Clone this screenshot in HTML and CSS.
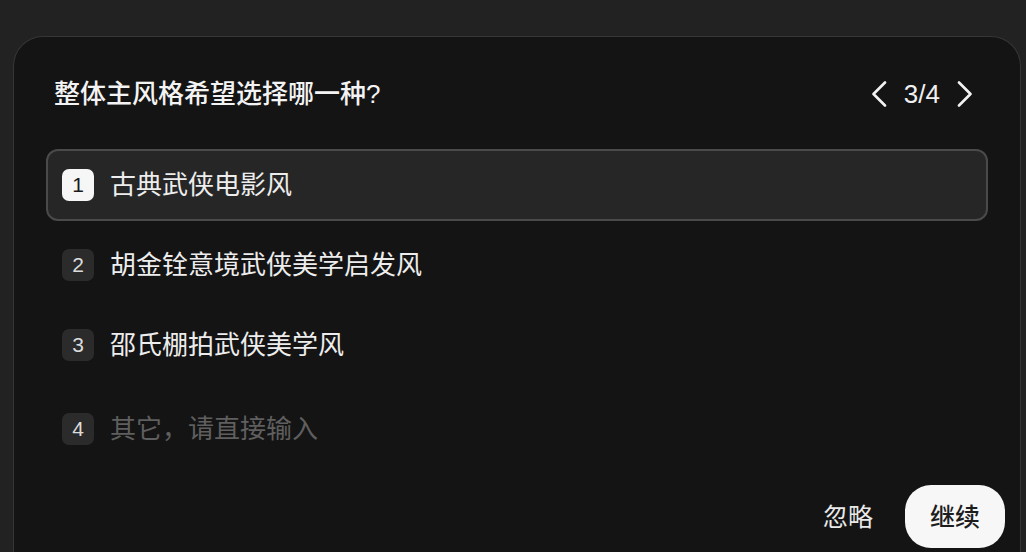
FILE: index.html
```html
<!DOCTYPE html>
<html lang="zh-CN">
<head>
<meta charset="utf-8">
<title>风格选择</title>
<link rel="stylesheet" href="styles.css">
</head>
<body>
<section class="card">
  <header class="card-head">
    <h2 class="question">整体主风格希望选择哪一种?</h2>
    <nav class="pager">
      <button class="pager-btn" aria-label="上一题">
        <svg width="16" height="26" viewBox="0 0 16 26"><path d="M14 1.5 L2.5 13 L14 24.5" fill="none" stroke="#f2f2f2" stroke-width="2.6" stroke-linecap="round" stroke-linejoin="round"/></svg>
      </button>
      <span class="pager-count">3/4</span>
      <button class="pager-btn" aria-label="下一题">
        <svg width="16" height="26" viewBox="0 0 16 26"><path d="M2 1.5 L13.5 13 L2 24.5" fill="none" stroke="#f2f2f2" stroke-width="2.6" stroke-linecap="round" stroke-linejoin="round"/></svg>
      </button>
    </nav>
  </header>

  <ul class="options">
    <li class="option is-active"><span class="badge">1</span><span class="label">古典武侠电影风</span></li>
    <li class="option"><span class="badge">2</span><span class="label">胡金铨意境武侠美学启发风</span></li>
    <li class="option"><span class="badge">3</span><span class="label">邵氏棚拍武侠美学风</span></li>
    <li class="option option-input"><span class="badge">4</span><span class="label placeholder">其它，请直接输入</span></li>
  </ul>

  <footer class="card-foot">
    <button class="btn-ghost">忽略</button>
    <button class="btn-primary">继续</button>
  </footer>
</section>
</body>
</html>
```

FILE: styles.css
```css
* { box-sizing: border-box; }

html, body {
  margin: 0;
  padding: 0;
  background: #222222;
  overflow: hidden;
}

body {
  height: 552px;
  font-family: "Liberation Sans", "Noto Sans CJK SC", sans-serif;
  color: #efefef;
  padding: 36px 5px 0 13px;
}

/* the sheet continues below the visible area, so its bottom edge is clipped */
.card {
  background: #141414;
  border: 1px solid #363636;
  border-bottom: 0;
  border-radius: 30px 30px 0 0;
  height: 516px;
  padding-top: 33px;
}

.card-head {
  display: flex;
  align-items: center;
  justify-content: space-between;
  height: 48px;
  padding: 0 47px 0 40px;
}

.question {
  margin: 0;
  font-size: 26px;
  font-weight: 500;
  line-height: 34px;
  color: #f3f3f3;
}

.pager {
  display: flex;
  align-items: center;
  gap: 17px;
}

.pager-btn {
  display: flex;
  padding: 0;
  background: none;
  border: 0;
}

.pager-count {
  font-size: 26px;
  line-height: 30px;
  color: #f0f0f0;
}

.options {
  list-style: none;
  margin: 31px 32px 0 32px;
  padding: 0;
  display: flex;
  flex-direction: column;
  gap: 8px;
}

.option {
  display: flex;
  align-items: center;
  gap: 16px;
  height: 72px;
  padding: 0 14px;
  border: 2px solid transparent;
  border-radius: 12px;
}

.option.is-active {
  background: #262626;
  border-color: #4a4a4a;
}

.option-input {
  margin-top: 4px;
}

.badge {
  flex: none;
  width: 32px;
  height: 32px;
  border-radius: 7px;
  background: #2b2b2b;
  color: #dcdcdc;
  font-size: 21px;
  line-height: 32px;
  text-align: center;
}

.is-active .badge {
  background: #f6f6f6;
  color: #1a1a1a;
}

.label {
  font-size: 26px;
  line-height: 34px;
  color: #ededed;
}

.label.placeholder {
  color: #5f5f5f;
}

.card-foot {
  display: flex;
  justify-content: flex-end;
  align-items: center;
  gap: 32px;
  margin-top: 20px;
  padding-right: 15px;
}

.btn-ghost,
.btn-primary {
  font-family: inherit;
  font-size: 25px;
  line-height: 34px;
  border: 0;
  cursor: pointer;
}

.btn-ghost {
  background: none;
  color: #e9e9e9;
  padding: 0;
}

.btn-primary {
  width: 100px;
  height: 63px;
  border-radius: 26px;
  background: #f7f7f7;
  color: #1d1d1d;
  font-weight: 500;
}
```
